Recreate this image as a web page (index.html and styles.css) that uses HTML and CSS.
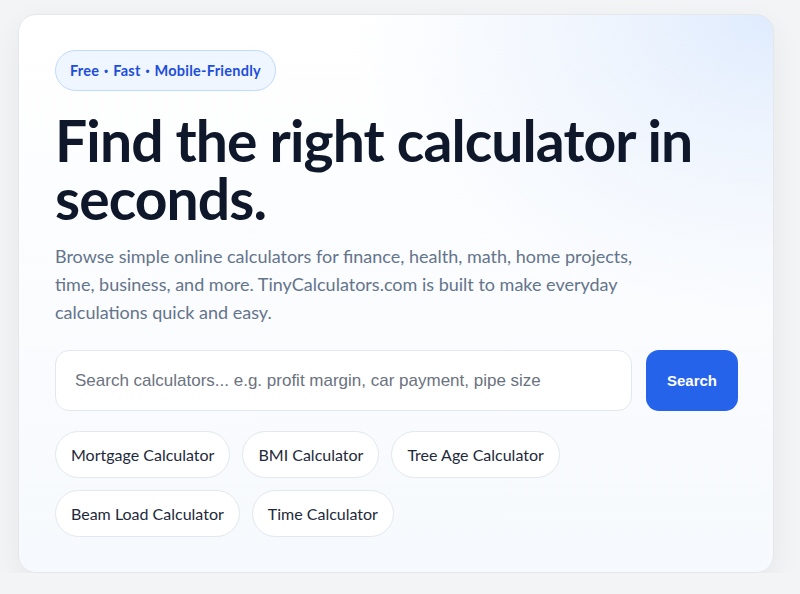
FILE: index.html
```html
<!DOCTYPE html>
<html lang="en">
<head>
<meta charset="utf-8">
<title>TinyCalculators.com</title>
<link rel="stylesheet" href="styles.css">
</head>
<body>
<section class="hero">
  <span class="badge">Free <span class="dot">•</span> Fast <span class="dot">•</span> Mobile-Friendly</span>
  <h1 class="title">Find the right calculator in seconds.</h1>
  <p class="lead">Browse simple online calculators for finance, health, math, home projects, time, business, and more. TinyCalculators.com is built to make everyday calculations quick and easy.</p>
  <form class="search">
    <input class="search-input" type="text" placeholder="Search calculators... e.g. profit margin, car payment, pipe size">
    <button class="search-btn" type="button">Search</button>
  </form>
  <div class="chips">
    <a class="chip">Mortgage Calculator</a>
    <a class="chip">BMI Calculator</a>
    <a class="chip">Tree Age Calculator</a>
    <a class="chip">Beam Load Calculator</a>
    <a class="chip">Time Calculator</a>
  </div>
</section>
</body>
</html>
```
FILE: styles.css
```css
* { box-sizing: border-box; }
html, body { margin: 0; padding: 0; }
body {
  background: #f3f4f6;
  font-family: "Lato", "Noto Sans", sans-serif;
  color: #0f172a;
  padding: 14px 26px 0 18px;
}
.hero {
  width: 756px;
  border: 1px solid #e5e7eb;
  border-radius: 18px;
  padding: 35px 36px 35px 36px;
  background:
    radial-gradient(ellipse 420px 300px at 100% 0%, #dfebfd 0%, rgba(223,235,253,0.5) 40%, rgba(255,255,255,0) 100%),
    linear-gradient(180deg, #ffffff 0%, #f6f9fd 100%);
  box-shadow: 0 10px 30px rgba(15, 23, 42, 0.06);
  display: flex;
  flex-direction: column;
  align-items: flex-start;
}
.badge {
  display: inline-block;
  padding: 10px 14px;
  border: 1px solid #bfdbfe;
  background: #eff6ff;
  color: #1d4ed8;
  border-radius: 999px;
  font-size: 14.5px;
  font-weight: 700;
  line-height: 19px;
  letter-spacing: 0.25px;
  word-spacing: 1px;
}
.dot {
  font-family: "Noto Sans", sans-serif;
  font-size: 11px;
  vertical-align: 1px;
}
.title {
  margin: 20px 0 0;
  font-size: 57px;
  line-height: 58px;
  font-weight: 700;
  letter-spacing: -0.9px;
  color: #0f172a;
  max-width: 683px;
}
.lead {
  margin: 15px 0 0;
  font-size: 18px;
  line-height: 28px;
  color: #64748b;
  max-width: 590px;
}
.search {
  margin: 24px 0 0;
  display: flex;
  gap: 14px;
  width: 683px;
}
.search-input {
  flex: 1;
  height: 61px;
  border: 1px solid #e2e8f0;
  border-radius: 14px;
  background: #ffffff;
  padding: 0 19px;
  font-family: "Liberation Sans", Arial, sans-serif;
  font-size: 17px;
  color: #111827;
  outline: none;
}
.search-input::placeholder { color: #6b7280; }
.search-btn {
  width: 92px;
  height: 61px;
  border: 0;
  border-radius: 13px;
  background: #2563eb;
  color: #ffffff;
  font-family: "Liberation Sans", Arial, sans-serif;
  font-weight: 700;
  font-size: 15px;
}
.chips {
  margin-top: 20px;
  display: flex;
  flex-wrap: wrap;
  gap: 12px;
  max-width: 600px;
}
.chip {
  display: inline-block;
  height: 47px;
  padding: 0 15px;
  line-height: 45px;
  border: 1px solid #e2e8f0;
  border-radius: 999px;
  background: #ffffff;
  font-size: 16px;
  color: #1e293b;
}
```
